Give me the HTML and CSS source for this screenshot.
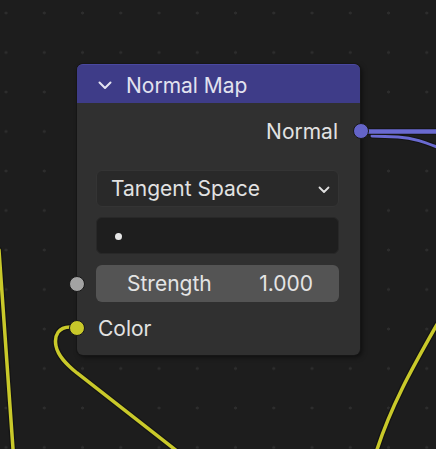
FILE: index.html
```html
<!DOCTYPE html>
<html>
<head>
<meta charset="utf-8">
<link rel="stylesheet" href="styles.css">
</head>
<body>
<div class="canvas">
  <svg class="wires" width="436" height="449" viewBox="0 0 436 449">
    <g fill="none" stroke-linecap="round">
      <path d="M -1 250 L 13.5 456" stroke="#141414" stroke-width="6"/>
      <path d="M -1 250 L 13.5 456" stroke="#c9c92a" stroke-width="3.5"/>
      <path d="M 72 327 C 58 326, 54 336, 56 346 S 66 364, 77 373 L 182 455" stroke="#141414" stroke-width="6"/>
      <path d="M 72 327 C 58 326, 54 336, 56 346 S 66 364, 77 373 L 182 455" stroke="#c9c92a" stroke-width="3.5"/>
      <path d="M 448 305 C 420 355, 392 400, 375 456" stroke="#141414" stroke-width="6"/>
      <path d="M 448 305 C 420 355, 392 400, 375 456" stroke="#c9c92a" stroke-width="3.5"/>
      <path d="M 372 136 L 398 137 C 414 138, 424 142, 442 149" stroke="#141414" stroke-width="5"/>
      <path d="M 372 136 L 398 137 C 414 138, 424 142, 442 149" stroke="#6a6ad0" stroke-width="3"/>
      <path d="M 366 131.5 L 442 131.5" stroke="#141414" stroke-width="6.5"/>
      <path d="M 366 131.5 L 442 131.5" stroke="#6a6ad0" stroke-width="4.5"/>
    </g>
  </svg>

  <div class="node">
    <div class="node-header">
      <svg class="collapse" width="14" height="9" viewBox="0 0 14 9">
        <path d="M1.5 1.5 L7 7 L12.5 1.5" fill="none" stroke="#e4e4f2" stroke-width="2" stroke-linecap="round" stroke-linejoin="round"/>
      </svg>
      <span class="node-title">Normal Map</span>
    </div>
    <div class="node-body">
      <div class="row row-output">
        <span class="label">Normal</span>
        <span class="socket socket-out socket-vector"></span>
      </div>
      <div class="dropdown">
        <span class="label">Tangent Space</span>
        <svg class="dd-arrow" width="12" height="8" viewBox="0 0 12 8">
          <path d="M1.5 1.5 L6 6 L10.5 1.5" fill="none" stroke="#e0e0e0" stroke-width="1.8" stroke-linecap="round" stroke-linejoin="round"/>
        </svg>
      </div>
      <div class="textfield">
        <span class="uv-dot"></span>
      </div>
      <div class="row row-input">
        <span class="socket socket-in socket-gray"></span>
        <div class="slider">
          <span class="label">Strength</span>
          <span class="value">1.000</span>
        </div>
      </div>
      <div class="row row-input row-color">
        <span class="socket socket-in socket-yellow"></span>
        <span class="label">Color</span>
      </div>
    </div>
  </div>
</div>
</body>
</html>
```

FILE: styles.css
```css
html, body {
  margin: 0;
  padding: 0;
  background: #1d1d1d;
}

.canvas {
  position: relative;
  width: 436px;
  height: 449px;
  overflow: hidden;
  background-color: #1d1d1d;
  background-image: radial-gradient(circle, #2d2d2d 0, #2d2d2d 1.2px, transparent 1.8px);
  background-size: 38.25px 39.5px;
  background-position: -13.1px -6.75px;
  font-family: Inter, "DejaVu Sans", sans-serif;
}

.wires {
  position: absolute;
  left: 0;
  top: 0;
}

.node {
  position: absolute;
  left: 77px;
  top: 64px;
  width: 283px;
  border-radius: 6px;
  background: #303030;
  box-shadow: 0 0 0 1px #161616, 2px 2px 5px rgba(0, 0, 0, 0.55);
  display: flex;
  flex-direction: column;
}

.node-header {
  height: 39px;
  box-sizing: border-box;
  background: #3e3c88;
  border-radius: 6px 6px 0 0;
  border-top: 1px solid #4a48a0;
  display: flex;
  align-items: center;
  padding-left: 21px;
  gap: 14px;
}

.collapse {
  display: block;
  margin-top: 2px;
}

.node-title {
  color: #e2e2ef;
  font-size: 21px;
  line-height: 1;
  margin-top: 2px;
}

.node-body {
  display: flex;
  flex-direction: column;
  padding: 12px 21px 12px 19px;
  color: #e2e2e2;
  font-size: 21px;
}

.label, .value {
  line-height: 1;
}

.row {
  position: relative;
  display: flex;
  align-items: center;
}

.row-output {
  height: 32px;
  justify-content: flex-end;
  padding-right: 1px;
}

.socket {
  position: absolute;
  top: 50%;
  width: 14px;
  height: 14px;
  margin-top: -8px;
  border-radius: 50%;
  border: 1.5px solid #181818;
}

.socket-out {
  right: -30px;
}

.socket-in {
  left: -27px;
}

.socket-vector {
  background: #6464c8;
}

.socket-gray {
  background: #a3a3a3;
}

.socket-yellow {
  background: #c8c82a;
}

.dropdown {
  margin-top: 23px;
  height: 37px;
  box-sizing: border-box;
  border-radius: 6px;
  background: #292929;
  border: 1px solid #343434;
  display: flex;
  align-items: center;
  justify-content: space-between;
  padding: 0 8px 0 14px;
}

.dd-arrow {
  display: block;
  margin-top: 2px;
}

.textfield {
  margin-top: 10px;
  height: 37px;
  box-sizing: border-box;
  border-radius: 6px;
  background: #1e1e1e;
  border: 1px solid #282828;
  display: flex;
  align-items: center;
  padding-left: 18px;
}

.uv-dot {
  width: 7px;
  height: 7px;
  border-radius: 50%;
  background: #e6e6e6;
  margin-top: 1px;
}

.row-input {
  margin-top: 11px;
}

.slider {
  flex: 1;
  height: 37px;
  box-sizing: border-box;
  border-radius: 6px;
  background: #545454;
  display: flex;
  align-items: center;
  justify-content: space-between;
  padding: 0 26px 0 31px;
  color: #e4e4e4;
}

.row-color {
  height: 30px;
  padding-left: 2px;
}
```
